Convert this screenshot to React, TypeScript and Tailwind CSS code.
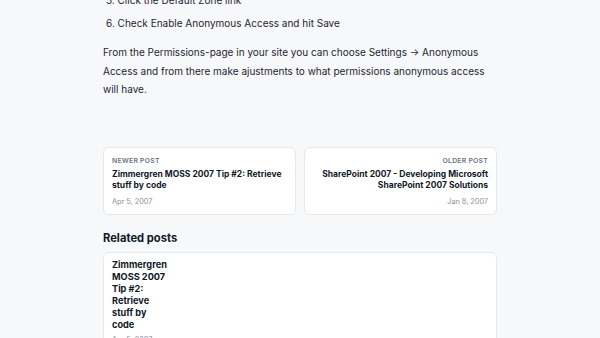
import React from 'react';

type PostLink = { label: string; title: string; date: string; align: 'left' | 'right' };

const navPosts: PostLink[] = [
  { label: 'Newer post', title: 'Zimmergren MOSS 2007 Tip #2: Retrieve stuff by code', date: 'Apr 5, 2007', align: 'left' },
  { label: 'Older post', title: 'SharePoint 2007 - Developing Microsoft SharePoint 2007 Solutions', date: 'Jan 8, 2007', align: 'right' },
];

const steps = ['Click the Default Zone link', 'Check Enable Anonymous Access and hit Save'];

const App: React.FC = () => {
  return (
    <div className="min-h-screen w-full bg-[#f7f8fa] text-[#1e2433] overflow-hidden" style={{ fontFamily: 'Inter, "Noto Sans", sans-serif' }}>
      <div className="w-[394px] mx-auto">
        <div className="-mt-[11px] pl-[3px] text-[10px] leading-[22px]">
          {steps.map((s, i) => (
            <div key={s} className={i === 0 ? 'mb-[1px]' : ''}>
              {i + 5}. {s}
            </div>
          ))}
        </div>

        <p className="mt-[9px] text-[10px] leading-[18.5px]">
          From the Permissions-page in your site you can choose Settings → Anonymous Access and from there make ajustments to what permissions anonymous access will have.
        </p>

        <div className="mt-[48px] grid grid-cols-2 gap-[8px]">
          {navPosts.map((p) => (
            <div
              key={p.label}
              className={`bg-white border border-[#e6e8ec] rounded-[6px] px-[8px] pt-[8px] pb-[7px] ${p.align === 'right' ? 'text-right' : 'text-left'}`}
            >
              <div className="text-[6.8px] font-semibold uppercase tracking-[0.04em] text-[#6b7280] leading-[10px]">{p.label}</div>
              <div className="mt-[3px] text-[8.5px] font-bold leading-[11px] text-[#111827]">{p.title}</div>
              <div className="mt-[6px] text-[7.3px] text-[#8b919c] leading-[10px]">{p.date}</div>
            </div>
          ))}
        </div>

        <h2 className="mt-[15px] text-[11.2px] font-bold leading-[16px] text-[#111827]">Related posts</h2>

        <div className="mt-[6px] bg-white border border-[#e6e8ec] rounded-[6px] px-[8px] pt-[6px] pb-[8px]">
          <div className="w-[58px]">
            <div className="text-[9.2px] font-bold leading-[12px] text-[#111827]">Zimmergren MOSS 2007 Tip #2: Retrieve stuff by code</div>
            <div className="mt-[4px] text-[7.3px] text-[#8b919c] leading-[10px]">Apr 5, 2007</div>
          </div>
        </div>
      </div>
    </div>
  );
};

export default App;
